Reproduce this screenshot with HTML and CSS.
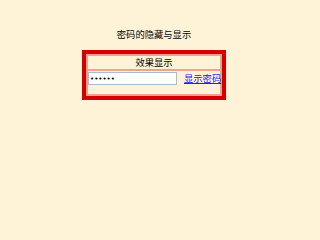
FILE: index.html
```html
<!DOCTYPE html>
<html lang="zh">
<head>
<meta charset="utf-8">
<link rel="stylesheet" href="styles.css">
</head>
<body>
<div class="page">
  <div class="title">密码的隐藏与显示</div>
  <div class="box">
    <div class="inner">
      <div class="head">效果显示</div>
      <div class="row">
        <input class="pwd" type="password" value="123456">
        <a class="link" href="#">显示密码</a>
      </div>
    </div>
  </div>
</div>
</body>
</html>
```

FILE: styles.css
```css
html, body {
  margin: 0;
  padding: 0;
  background: #fff3d7;
}
.page {
  width: 302px;
  height: 200px;
  display: flex;
  flex-direction: column;
  align-items: center;
  padding-left: 6px;
  box-sizing: border-box;
  font-family: "Noto Sans CJK SC", "Liberation Sans", sans-serif;
  color: #000;
}
.title {
  margin-top: 28px;
  font-size: 9.3px;
  line-height: 12px;
  height: 12px;
}
.box {
  margin-top: 10px;
  width: 144px;
  height: 50px;
  box-sizing: border-box;
  border: 4px solid #d40000;
  background: #fff3d7;
}
.inner {
  height: 100%;
  box-sizing: border-box;
  border: 2px solid #f4a08c;
  display: flex;
  flex-direction: column;
}
.head {
  height: 13px;
  border-bottom: 2px solid #f4a08c;
  text-align: center;
  font-size: 9.3px;
  line-height: 13px;
}
.row {
  flex: 1;
  display: flex;
  align-items: flex-start;
  padding-top: 1px;
  white-space: nowrap;
}
.pwd {
  flex: none;
  width: 89px;
  height: 13px;
  box-sizing: border-box;
  margin: 0;
  padding: 0 1px;
  border: 1px solid #a8bcd0;
  background: #fff;
  font-size: 7px;
  font-family: "DejaVu Sans", sans-serif;
  color: #000;
}
.link {
  flex: none;
  margin-left: 7px;
  font-size: 9.3px;
  line-height: 13px;
  color: #2020f0;
  text-decoration: underline;
  white-space: nowrap;
}
```
